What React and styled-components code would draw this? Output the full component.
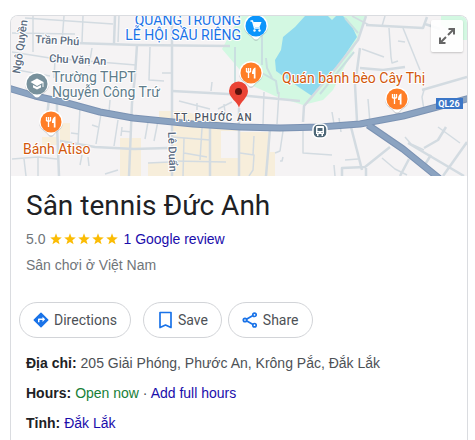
import React from 'react';
import styled, { createGlobalStyle } from 'styled-components';

const GlobalStyle = createGlobalStyle`
  body {
    margin: 0;
    background: #fff;
    color: #4d5156;
    font: 14px/20px "Liberation Sans", Arial, sans-serif;
  }

  a {
    color: #1a0dab;
    text-decoration: none;
  }

  a:hover {
    text-decoration: underline;
  }
`
const Card = styled.main`
  box-sizing: border-box;
  min-height: calc(100vh - 15px);
  margin: 15px 7px 0 10px;
  border: 1px solid #dadce0;
  border-bottom: none;
  border-radius: 8px 8px 0 0;
  overflow: hidden;
`
const MapFrame = styled.div`
  position: relative;
  height: 160px;
  background: #f5f3f4;
`
const MapCanvas = styled.svg`
  display: block;
  width: 100%;
  height: 100%;
`
const ExpandButton = styled.button`
  position: absolute;
  top: 4px;
  right: 4px;
  display: flex;
  align-items: center;
  justify-content: center;
  width: 32px;
  height: 32px;
  padding: 0;
  border: none;
  border-radius: 2px;
  background: rgba(255,255,255,.9);
  box-shadow: 0 1px 2px rgba(0,0,0,.2);
  color: #666;
  cursor: pointer;
`
const MapLabel = styled.text`
  font-family: Roboto, sans-serif;
  font-size: ${props => props.$size || 14}px;
  font-weight: ${props => props.$weight || 400};
  fill: ${props => props.$color || '#5b6b7f'};
  stroke: #fff;
  stroke-width: 2px;
  stroke-linejoin: round;
  paint-order: stroke;
  text-anchor: ${props => props.$anchor || 'start'};
`
const TownLabel = styled(MapLabel)`
  letter-spacing: 1px;
`
const Header = styled.header`
  padding: 12px 15px 0;
`
const Title = styled.h1`
  margin: 0;
  color: #202124;
  font: 400 28px/36px Roboto, sans-serif;
`
const Rating = styled.div`
  display: flex;
  align-items: center;
  gap: 5px;
  margin-top: 5px;
  color: #70757a;
`
const Stars = styled.span`
  display: flex;
  gap: 2px;
`
const Category = styled.p`
  margin: 6px 0 0;
  color: #70757a;
`
const Actions = styled.div`
  display: flex;
  flex-wrap: wrap;
  gap: 6px;
  padding: 27px 8px 0;
`
const Action = styled.button`
  box-sizing: border-box;
  display: flex;
  align-items: center;
  gap: 4px;
  height: 36px;
  margin-right: ${props => props.$spaced ? '6px' : '0'};
  padding: 0 13px 0 12px;
  border: 1px solid #d2d4d8;
  border-radius: 18px;
  background: #fff;
  color: #4d5156;
  font: 14px/20px Roboto, sans-serif;
  cursor: pointer;

  svg {
    color: #1a73e8;
  }
`
const Facts = styled.dl`
  margin: 0;
  padding: 10px 15px;
`
const Fact = styled.div`
  display: flex;
  gap: 4px;
  line-height: 30px;

  dt {
    color: #202124;
    font-weight: 700;
  }

  dd {
    margin: 0;
  }
`
const Open = styled.span`
  color: #188038;
`

const streets = [
  'M12 33 L75 34',
  'M12 52 L50 58 L136 65',
  'M12 69 L50 76',
  'M33 16 L33 52',
  'M25 18 L113 24',
  'M64 16 L62 42',
  'M92 48 L89 66',
  'M83 16 L82 42',
  'M119 16 L118 42',
  'M55 60 L54 78',
  'M150 47 L149 80 L164 81',
  'M162 73 L171 73',
  'M12 159 L38 157 L57 159',
  'M24 159 L26 176',
  'M38 157 L38 176',
  'M80 108 L78 143',
  'M101 114 L96 144',
  'M92 125 L98 127',
  'M118 120 L114 146',
  'M110 100 L109 112',
  'M71 133 L79 134',
  'M82 155 L80 165 M88 157 L89 166',
  'M105 174 L118 170',
  'M122 127 L121 136 M122 131 L132 132',
  'M148 122 L145 139 M158 121 L154 141',
  'M184 138 L183 176 M184 153 L207 157',
  'M172 161 L226 162',
  'M148 163 L170 162',
  'M202 128 L200 160',
  'M172 137 L210 140',
  'M179 101 L210 109 M197 103 L197 110',
  'M212 82 L211 91',
  'M218 109 L232 102 M224 104 L225 112',
  'M240 153 L254 155 L253 170 L249 176',
  'M254 136 L253 155',
  'M264 92 L263 124',
  'M275 153 L280 151 L283 131',
  'M280 161 L282 161 L283 157',
  'M279 92 L277 124',
  'M303 131 L303 153 L332 155',
  'M332 112 L334 124 M339 118 L341 132',
  'M389 28 L391 57 L392 63 L398 61',
  'M398 41 L405 42',
  'M403 28 L420 70',
  'M368 99 L370 123',
  'M424 90 L422 97 L424 110',
  'M362 49 L384 57',
  'M352 16 L369 25',
  'M385 16 L382 26',
  'M405 137 L411 144 L424 150',
  'M438 127 L460 143',
  'M382 158 L395 169 L407 175',
  'M345 160 L358 159',
  'M334 165 L335 176',
]

const roads = [
  'M75 43 L137 45 L230 46',
  'M137 45 L135 76 L132 103 L129 176',
  'M115 16 L114 43',
  'M172 16 L172 176',
  'M172 91 L228 94 L300 101',
  'M49 99 L46 125 M57 100 L57 125 L59 176',
  'M60 141 L95 147 L134 149 L168 148',
  'M210 127 L210 176',
  'M239 108 L239 176',
  'M270 129 L266 176',
  'M366 16 L358 40 L337 67 L304 106 L303 122',
  'M366 25 L423 28 L427 17 M425 24 L440 29',
  'M360 48 L355 85 L357 121',
  'M360 68 L383 70 L405 67',
  'M351 127 L362 170',
  'M342 176 L342 168 L365 167 L390 147',
  'M366 168 L366 176',
  'M467 77 L422 90',
  'M408 143 L464 176',
  'M424 148 L438 140 L446 127',
  'M467 142 L443 176',
  'M409 159 L400 176 M431 155 L424 166',
]

const highway = 'M8 88 L35 96 L67 103 L100 112 L133 118 L193 124 L240 127 L280 128 L320 127 L360 124 L403 116 L437 107 L470 98 M368 125 L403 149 L440 179'

const shops = [
  { x: 251, y: 73 },
  { x: 397, y: 99 },
  { x: 51, y: 122 },
]

const PlacePin = ({ x, y, color, children }) => (
  <g transform={`translate(${x} ${y})`}>
    <path d="M-12 1 a12 12 0 1 1 24 0 c0 6-6 8-9 12 q-3 4-6 0 c-3-4-9-6-9-12z" fill="#7c8790" opacity=".35" />
    <path d="M-12 0 a12 12 0 1 1 24 0 c0 6-6 8-9 12 q-3 3-6 0 c-3-4-9-6-9-12z" fill="#fff" />
    <circle r="10.500" fill={color} />
    {children}
  </g>
)

const StreetMap = () => (
  <MapCanvas viewBox="11 16 456 160" preserveAspectRatio="xMidYMid slice" role="img" aria-label="Map">
    <rect x="11" y="16" width="456" height="160" fill="#f5f3f4" />
    <g fill="#f7eedb">
      <path d="M60 123 h10 v18 h-10z M42 137 h16 v8 h-16z M120 138 h21 v38 h-21z" />
      <path d="M159 111 h25 l56 17 v23 h-20 v25 h-72 v-13 h24 v-40 l-13 -2z M240 132 h30 v20 h5 v24 h-55 v-25 h-2 v-18z" />
    </g>
    <path d="M162 139 h10 v22 h-10z M221 131 h17 v27 h-17z" fill="#f5f3f4" />
    <path d="M240 16 L366 16 L358 40 L333 90 L323 100 L303 105 L275 96 L253 86 L240 70 L222 49z" fill="#d3f8e2" />
    <path d="M441 16 H467 V40 H463 L441 25z" fill="#d3f8e2" />
    <path d="M305 16 L295 27 L283 37 L281 50 L275 60 L276 71 L300 88 L312 96 L337 67 L357 37 L351 24 L343 16 L336 16 L332 20 L328 16z" fill="#90daee" />
    <g fill="none" stroke="#c9dfe0" strokeWidth="2">
      <path d="M235 47 V86 M262 30 V65 M266 58 L267 68 L272 78" />
      <path d="M262 73 L276 81 L278 94 M345 18 L358 33 M354 52 L320 94" />
    </g>
    <g fill="none" stroke="#d3dbe1" strokeLinejoin="round">
      {streets.map(d => <path key={d} d={d} strokeWidth="1.500" />)}
      {roads.map(d => <path key={d} d={d} strokeWidth="2.500" />)}
    </g>
    <g fill="none" strokeLinejoin="round">
      <path d={highway} stroke="#7b92b3" strokeWidth="7" />
      <path d={highway} stroke="#8ba3c1" strokeWidth="5" />
    </g>

    <MapLabel $size={11} $weight={500} transform="translate(35 43) rotate(3)">Trần Phú</MapLabel>
    <MapLabel $size={11} $weight={500} transform="translate(49 62) rotate(3)">Chu Văn An</MapLabel>
    <MapLabel $size={11} $weight={500} transform="translate(20 74) rotate(-82)">Ngô Quyền</MapLabel>
    <MapLabel $size={11} $weight={500} transform="translate(168 132) rotate(88)">Lê Duẩn</MapLabel>
    <MapLabel $color="#607d8b" x="52" y="82">Trường THPT</MapLabel>
    <MapLabel $color="#607d8b" x="52" y="97">Nguyễn Công Trứ</MapLabel>
    <MapLabel $color="#1a73e8" $anchor="end" x="241" y="25">QUẢNG TRƯỜNG</MapLabel>
    <MapLabel $color="#1a73e8" $anchor="end" x="241" y="40">LỄ HỘI SẦU RIÊNG</MapLabel>
    <MapLabel $color="#d2570c" x="282" y="83">Quán bánh bèo Cây Thị</MapLabel>
    <MapLabel $color="#d2570c" x="23" y="154">Bánh Atiso</MapLabel>
    <TownLabel $size={10} $weight={500} $color="#4d5663" x="174" y="121">TT. PHƯỚC AN</TownLabel>

    {shops.map(({ x, y }) => (
      <PlacePin key={x} x={x} y={y} color="#ff7e27">
        <path d="M-4.500 -5 V-1 M-2.500 -5 V5 M-.5 -5 V-1 M-4.500 -1 H-.5" fill="none" stroke="#fff" strokeWidth="1.300" />
        <path d="M4.500 -5.500 C2 -5 1 -2 1 1 H2.800 V5.500 H4.500z" fill="#fff" />
      </PlacePin>
    ))}
    <PlacePin x={256} y={26} color="#0b95fb">
      <path d="M-5.500 -5 H-3.500 L-1.500 2 H4" fill="none" stroke="#fff" strokeWidth="1.300" />
      <path d="M-3 -4 H5.500 L3.500 1 H-1.500z" fill="#fff" />
      <circle cx="-1.500" cy="4.500" r="1.200" fill="#fff" />
      <circle cx="3.500" cy="4.500" r="1.200" fill="#fff" />
    </PlacePin>
    <PlacePin x={37} y={84} color="#78919c">
      <path d="M-6.500 -2 L0 -5.500 L6.500 -2 V3 H5.500 V-1 L0 2z M-4 1 L0 3 L4 1 V3.500 L0 5.500 L-4 3.500z" fill="#fff" />
    </PlacePin>

    <rect x="313" y="124" width="14" height="14" rx="5" fill="#4f6878" stroke="#fff" strokeWidth="1.500" />
    <path d="M317 126 H323 Q324 126 324 127 V134 H323 V136 H321.500 V134 H318.500 V136 H317 V134 H316 V127 Q316 126 317 126z" fill="#fff" />
    <path d="M317.500 128 H322.500 V131 H317.500z M317.500 132 h1 v1 h-1z M321.500 132 h1 v1 h-1z" fill="#4f6878" />

    <path d="M436 98 H463 V109 H436z" fill="#3b76c7" />
    <text x="449" y="107" textAnchor="middle" fill="#fff" fontFamily="Roboto, sans-serif" fontSize="9" fontWeight="700">QL26</text>

    <path d="M239 108 C238 102 229 98 229 91 a9.500 9.500 0 0 1 19 0 C248 98 240 102 239 108z" fill="#ea4335" />
    <circle cx="238.500" cy="91.500" r="3.500" fill="#5d110c" />
  </MapCanvas>
)

const Star = () => (
  <svg width="12" height="12" viewBox="0 0 12 12" aria-hidden="true">
    <path d="M6 .3 L7.500 4.300 L11.800 4.500 L8.400 7.200 L9.600 11.300 L6 8.900 L2.400 11.300 L3.600 7.200 L.2 4.500 L4.500 4.300z" fill="#fbbc04" />
  </svg>
)

const ExpandIcon = () => (
  <svg width="18" height="18" viewBox="0 0 18 18" fill="none" stroke="currentColor" strokeWidth="2" aria-hidden="true">
    <path d="M10.500 2 H16 V7.500 M16 2 L10 8 M2 10.500 V16 H7.500 M2 16 L8 10" />
  </svg>
)

const DirectionsIcon = () => (
  <svg width="18" height="18" viewBox="0 0 24 24" fill="currentColor" aria-hidden="true">
    <path d="M21.710 11.290l-9-9a1 1 0 0 0-1.410 0l-9 9a1 1 0 0 0 0 1.410l9 9c.39.39 1.020.39 1.410 0l9-9a1 1 0 0 0 0-1.410zM14 14.500V12h-4v3H8v-4c0-.55.45-1 1-1h5V7.500l3.500 3.500-3.500 3.500z" />
  </svg>
)

const SaveIcon = () => (
  <svg width="18" height="18" viewBox="0 0 18 18" fill="none" stroke="currentColor" strokeWidth="1.700" aria-hidden="true">
    <path d="M4 1.500 H15 V16.500 L9.500 14 L4 16.500z" strokeLinejoin="round" />
  </svg>
)

const ShareIcon = () => (
  <svg width="18" height="18" viewBox="0 0 18 18" fill="none" stroke="currentColor" strokeWidth="1.700" aria-hidden="true">
    <path d="M12 4.500 L5 8.500 M5 9.500 L12 13.500" />
    <circle cx="13.500" cy="3.800" r="1.700" />
    <circle cx="4" cy="9" r="1.700" />
    <circle cx="13.500" cy="14.200" r="1.700" />
  </svg>
)

const App = () => (
  <React.Fragment>
    <GlobalStyle />
    <Card>
      <MapFrame>
        <StreetMap />
        <ExpandButton aria-label="Expand map"><ExpandIcon /></ExpandButton>
      </MapFrame>
      <Header>
        <Title>Sân tennis Đức Anh</Title>
        <Rating>
          <span>5.0</span>
          <Stars>
            {[1, 2, 3, 4, 5].map(n => <Star key={n} />)}
          </Stars>
          <a href="#reviews">1 Google review</a>
        </Rating>
        <Category>Sân chơi ở Việt Nam</Category>
      </Header>
      <Actions>
        <Action $spaced><DirectionsIcon />Directions</Action>
        <Action><SaveIcon />Save</Action>
        <Action><ShareIcon />Share</Action>
      </Actions>
      <Facts>
        <Fact>
          <dt>Địa chỉ:</dt>
          <dd>205 Giải Phóng, Phước An, Krông Pắc, Đắk Lắk</dd>
        </Fact>
        <Fact>
          <dt>Hours:</dt>
          <dd><Open>Open now</Open> · <a href="#hours">Add full hours</a></dd>
        </Fact>
        <Fact>
          <dt>Tỉnh:</dt>
          <dd><a href="#province">Đắk Lắk</a></dd>
        </Fact>
      </Facts>
    </Card>
  </React.Fragment>
)

export default App;
